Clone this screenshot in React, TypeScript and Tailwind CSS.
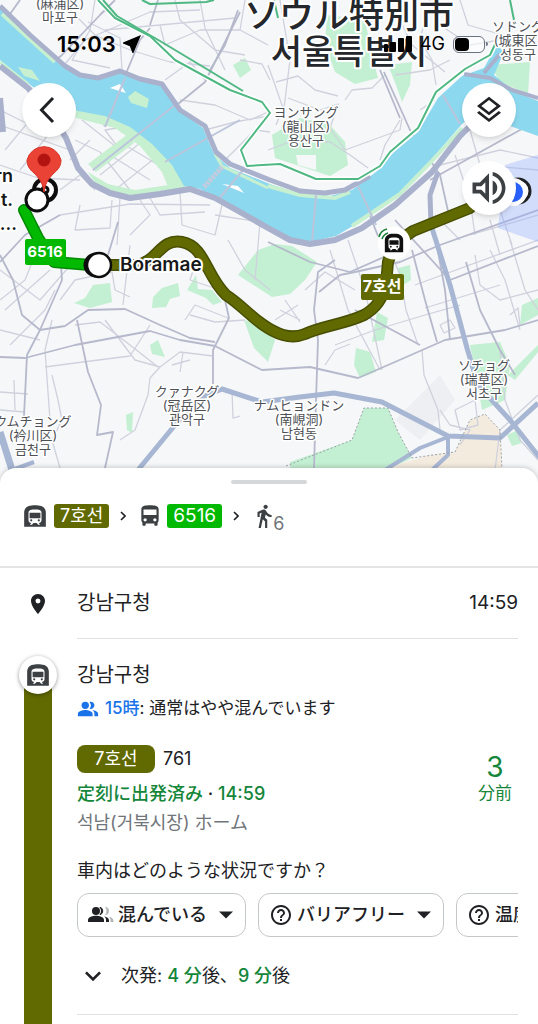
import { useState } from "react";
import {
  MdDirectionsBus,
  MdDirectionsWalk,
  MdHelpOutline,
  MdKeyboardArrowDown,
  MdNearMe,
  MdOutlineLayers,
  MdOutlineVolumeUp,
  MdPeopleAlt,
  MdPlace,
  MdSubway,
} from "react-icons/md";

const SOUTH_EXPRESSWAY =
  "M0 66 L28 88 L50 112 L66 138 L78 168 L92 184 L110 193 L130 198 L160 194 L190 189 L215 198 L240 212 L268 228 L290 240 L310 244 L335 240 L362 228 L395 205 L432 172 L460 136 L478 118";
const NORTH_EXPRESSWAY =
  "M0 6 L30 35 L65 66 L80 75 L98 78 L120 71 L140 79 L162 84 L180 110 L205 126 L216 152 L230 164 L270 180 L300 191 L325 193 L345 190 L370 176";
const METRO_LINE =
  "M470 208 L413 231 L394 244 L388 262 L386 284 C382 300 376 308 364 315 C345 324 322 326 305 334 C290 340 276 334 262 324 C248 314 240 304 226 295 C206 276 205 246 182 242 C160 238 158 262 136 265 L104 265";
const BUS_LINE = "M24 210 L38 238 L54 262 L90 265";

const majorRoads = [
  "M24 416 L27 355 L40 330 L62 280 L60 250",
  "M0 357 L25 358 L75 345 L150 331 L180 340 L215 346 L262 370 L310 367 L358 378 L395 362 L445 340 L505 330 L538 320",
  "M40 330 L22 315 L13 280 L0 255",
  "M40 330 L65 326 L88 310 L125 309 L160 325 L190 338 L215 342",
  "M77 320 L88 372 L101 405 L97 435 L113 432 L105 468",
  "M213 384 L213 350 L229 318 L225 300",
  "M93 170 L140 135 L205 82 L240 12",
  "M210 70 L225 45 L238 10",
  "M384 72 L410 130 L440 175 L450 220",
  "M430 180 L520 130 L538 124",
  "M395 220 L450 280 L538 246",
  "M319 292 L340 275 L355 272 L400 262 L440 245 L538 210",
  "M355 310 L420 345",
  "M314 468 L316 400 L318 340 L314 310 L318 272 L335 260",
  "M412 250 L425 300 L437 342",
  "M466 262 L480 310 L500 350 L515 375",
  "M435 235 L445 290 L450 340",
  "M268 242 L310 262 L350 272 L400 250",
  "M318 192 L312 240",
  "M358 186 L378 236",
  "M380 70 L400 118",
  "M104 126 L140 40 L150 28",
  "M38 75 L62 55 L100 15 L115 0",
  "M0 28 L20 0",
  "M150 25 L158 0",
  "M60 215 L25 235 L0 262",
  "M118 222 L108 255",
];

const minorRoads = [
  "M60 0 L95 35 L130 50 L170 62 L210 66",
  "M95 0 L90 30 L72 60 L110 68",
  "M60 70 L85 40 L150 12 L200 10",
  "M88 22 L120 38 L122 70",
  "M105 30 L160 25 L235 18",
  "M160 25 L165 45 L200 30 L240 30",
  "M175 0 L180 20 L215 50 L245 55",
  "M200 0 L205 28 L225 70",
  "M245 0 L240 30 L268 45",
  "M165 80 L190 62 L205 80",
  "M240 60 L262 64 L270 80",
  "M180 100 L215 105 L250 120 L268 112",
  "M205 130 L235 122 L268 116",
  "M225 160 L255 130 L270 132",
  "M268 65 L283 108 L276 125",
  "M280 0 L290 60 L284 108",
  "M276 82 L298 76 L315 90 L338 96",
  "M288 98 L320 110 L338 104 L330 128 L345 150",
  "M268 150 L295 140 L330 142 L350 155 L368 168",
  "M345 100 L352 90 L372 88 L385 75",
  "M345 150 L400 130 L402 118",
  "M430 0 L420 40 L432 60 L436 85",
  "M440 25 L470 45 L500 40",
  "M395 75 L430 70 L450 60",
  "M400 20 L412 45 L445 72",
  "M460 0 L468 25 L520 40",
  "M0 110 L30 125 L60 115",
  "M0 125 L70 150",
  "M5 150 L30 120 L40 95",
  "M20 170 L60 120",
  "M0 165 L38 178 L80 180",
  "M60 190 L80 175 L95 190",
  "M90 140 L70 160",
  "M82 120 L120 150 L105 130 L135 125",
  "M75 140 L100 152 L130 190",
  "M110 155 L150 180",
  "M125 145 L170 172",
  "M100 175 L150 135",
  "M115 190 L165 150",
  "M80 205 L75 230 L110 228 L112 200",
  "M120 198 L117 245",
  "M60 215 L130 204 L210 205",
  "M150 198 L160 215 L205 212",
  "M130 235 L150 215 L140 200",
  "M180 192 L182 225 L215 235 L222 205",
  "M215 215 L260 222 L255 280",
  "M228 240 L245 270 L270 290",
  "M130 245 L123 305",
  "M60 300 L75 280 L112 272 L115 290 L130 297",
  "M0 270 L40 300 L75 260",
  "M5 310 L50 270",
  "M0 300 L25 280 L35 255",
  "M10 345 L45 310 L55 290",
  "M0 330 L40 340",
  "M45 367 L75 363 L130 356 L150 325",
  "M75 325 L100 322 L130 345 L158 367",
  "M50 420 L45 350 L52 320",
  "M52 375 L58 400 L62 420 L52 440 L60 468",
  "M105 320 L135 360 L160 367 L180 352 L213 356",
  "M160 367 L150 378 L148 395 L135 430 L120 440",
  "M172 365 L190 360 M183 352 L180 372",
  "M0 392 L28 394 M14 380 L15 410 M0 410 L25 412",
  "M190 315 L215 322 L245 320",
  "M185 320 L195 305 L228 318",
  "M200 250 L190 280 L220 290",
  "M232 390 L233 418 L240 416",
  "M280 310 L300 320 M275 320 L298 305 M285 300 L300 322",
  "M305 290 L325 272 L355 290",
  "M330 250 L348 310 L380 370",
  "M348 240 L365 290 L382 370",
  "M335 345 L375 330 L425 315 L460 305",
  "M325 365 L335 350 L350 344",
  "M422 350 L424 375 L438 410 L440 430",
  "M390 250 L400 275 L406 310 L418 345",
  "M475 255 L480 285 L500 300 L538 290",
  "M490 250 L505 280 L520 330",
  "M510 240 L525 290 L538 310",
  "M415 285 L538 240",
  "M425 308 L500 285",
  "M440 165 L500 150 L538 158",
  "M455 155 L470 200 L475 235",
  "M435 215 L460 240",
  "M470 235 L538 215",
  "M500 210 L512 245",
  "M490 220 L500 255",
  "M440 325 L450 320 L455 328 L444 333 Z",
  "M510 315 L518 308 L520 325",
  "M455 410 L475 400 L478 425 L460 430 Z",
  "M440 410 L450 425 L470 430 L460 445",
  "M500 350 L505 400 L520 440 L538 460",
  "M495 470 L500 430 L538 395",
  "M400 120 L385 145 L380 160",
  "M420 110 L435 100",
  "M470 130 L480 165 L538 170",
];

const parks = [
  "M327 15 L365 20 L372 55 L378 78 L355 84 L335 72 L325 45 Z",
  "M388 65 L412 62 L410 85 L402 102 L396 85 Z",
  "M272 135 L300 118 L330 125 L345 142 L348 165 L330 176 L275 158 Z",
  "M233 65 L245 58 L251 70 L240 78 Z",
  "M490 65 L530 62 L528 94 L500 82 Z",
  "M74 303 L85 298 L93 285 L110 283 L112 302 L90 308 Z",
  "M152 308 L153 297 L162 288 L178 283 L180 296 L170 299 L166 307 Z",
  "M187 290 L196 275 L198 289 L212 290 L222 302 L213 305 L206 298 Z",
  "M150 345 L158 340 L165 357 L152 354 Z",
  "M126 415 L133 412 L132 433 L127 430 Z",
  "M238 275 L258 250 L275 244 L292 246 L317 262 L305 280 L290 294 L272 297 Z",
  "M244 320 L262 325 L275 340 L268 362 L254 348 Z",
  "M356 348 L370 352 L376 372 L360 378 L354 365 Z",
  "M377 312 L388 318 L384 340 L372 342 Z",
  "M398 268 L410 265 L411 280 L402 286 Z",
  "M470 345 L500 342 L510 365 L505 400 L482 410 L476 375 Z",
  "M522 305 L538 298 L538 315 L520 325 Z",
  "M508 375 L538 345 L538 352 L515 380 Z",
  "M507 435 L518 430 L522 443 L512 446 Z",
  "M290 462 L352 440 L364 408 L388 408 L398 432 L412 458 L392 468 L290 468 Z",
];

const bridges = [
  "M125 78 L105 127",
  "M175 105 L93 170",
  "M240 120 L165 162",
  "M243 170 L218 200",
  "M316 195 L312 243",
  "M358 186 L376 225",
  "M443 95 L460 124",
];

function PlaceLabel({ x, y, lines }: { x: number; y: number; lines: string[] }) {
  return (
    <text
      textAnchor="middle"
      fontSize="13"
      fill="#4d5055"
      stroke="#ffffff"
      strokeWidth="3"
      strokeLinejoin="round"
      paintOrder="stroke"
    >
      {lines.map((line, idx) => (
        <tspan key={line} x={x} y={y + idx * 14}>
          {line}
        </tspan>
      ))}
    </text>
  );
}

function RouteMap() {
  return (
    <svg
      viewBox="0 0 538 484"
      preserveAspectRatio="xMidYMin slice"
      className="block h-full w-full"
      role="img"
      aria-label="Route map"
    >
      <rect width="538" height="484" fill="#f6f7f9" />
      <path d="M395 420 L440 375 L455 400 L420 440 Z M340 468 L375 425 L395 468 Z" fill="#eeeff2" />
      {parks.map((d) => (
        <path key={d} d={d} fill="#c3efd2" />
      ))}
      <path d="M296 155 L316 155 L316 170 L298 165 Z" fill="#f6f7f9" />
      <path d="M385 468 L430 455 L455 452 L470 420 L485 414 L500 430 L502 468 Z" fill="#f4ebdf" />

      <g fill="none" strokeLinejoin="round">
        <g stroke="#cfd2dd" strokeWidth="1.3">
          {minorRoads.map((d) => (
            <path key={d} d={d} />
          ))}
        </g>
        <g stroke="#b5b9cb" strokeWidth="1.8">
          {majorRoads.map((d) => (
            <path key={d} d={d} />
          ))}
        </g>
      </g>

      {/* Han river and its banks */}
      <path d="M72 106 L105 113 L132 126 L155 143 L175 163 L188 186 L170 192 L162 172 L140 146 L115 128 L76 118 Z" fill="#c6f0d0" />
      <path d="M128 134 L88 164 L96 172 L134 143 Z" fill="#c6f0d0" />
      <path d="M88 172 L108 184 L135 190 L175 184 L174 190 L130 198 L98 188 Z" fill="#c6f0d0" />
      <path
        d="M0 8 L30 37 L65 68 L80 77 L98 80 L120 73 L140 81 L162 86 L178 110 L203 128 L214 154 L230 168 L270 184 L300 194 L330 196 L352 190 L376 172 L394 152 L418 132 L438 98 L462 76 L484 68 L497 45 L504 52 L494 75 L515 92 L538 101 L538 136 L510 126 L478 112 L462 124 L436 154 L396 196 L366 218 L336 236 L310 242 L288 238 L262 224 L225 203 L200 189 L184 186 L172 165 L152 144 L130 127 L105 116 L78 111 L50 100 L24 80 L0 60 Z"
        fill="#8cd8ef"
      />
      <path d="M2 14 L55 62 M268 186 L300 195 L335 198 L350 192 M462 128 L430 163 L400 194 L352 226" fill="none" stroke="#c6f0d0" strokeWidth="4" />
      <path d="M0 62 L28 84 M215 154 L222 166 L268 188" fill="none" stroke="#c6f0d0" strokeWidth="3" />
      <path d="M18 67 L32 70 L40 81 L24 76 Z M128 97 L135 91 L149 99 L147 108 L131 103 Z" fill="#c6f0d0" />
      <path d="M110 88 L120 84 L126 93 Z M222 184 L238 186 L244 193 Z" fill="#fff" />
      <g fill="none" stroke="#bcc5db" strokeWidth="2">
        {bridges.map((d) => (
          <path key={d} d={d} />
        ))}
      </g>
      <path d="M204 187 L223 166" stroke="#c4cbdc" strokeWidth="5" strokeDasharray="3 1" />

      <g fill="none" stroke="#a9b1cc" strokeLinejoin="round">
        <path d={SOUTH_EXPRESSWAY} strokeWidth="6" />
        <path d={NORTH_EXPRESSWAY} strokeWidth="5" />
        <path d="M464 74 L490 78 L512 90 L538 98" strokeWidth="4" />
        <path d="M484 73 L500 54" strokeWidth="4" />
        <path d="M0 98 L3 132" strokeWidth="6" />
        <path d="M438 172 L430 195 L431 225" strokeWidth="5" />
      </g>
      <g fill="none" stroke="#a7b6d3" strokeLinejoin="round">
        <path d="M431 225 L450 285 L467 348 L478 385 L510 420 L540 458" strokeWidth="5" />
        <path d="M138 470 L175 425 L200 398 L222 389 L262 402 L300 397 L334 393 L382 402 L448 436 L500 438 L538 403" strokeWidth="5" />
        <path d="M385 470 L420 448 L448 437 L448 455 L432 470" strokeWidth="4" />
        <path d="M0 432 L12 470" strokeWidth="7" />
        <path d="M12 470 L34 462" strokeWidth="4" />
      </g>
      <path
        d="M286 466 L352 440 L364 408 L388 408 L398 432 L412 458 L455 452 L470 420 L485 414 L500 430 L502 468"
        fill="none"
        stroke="#9aa3a8"
        strokeDasharray="2 2"
      />

      {/* Line 2 */}
      <path
        d="M98 0 L115 18 L150 36 L175 60 L230 90 L262 102 L270 113 L241 150 L247 166 L280 164 L316 179 L358 179 L380 166 L390 152 L418 128 L436 92 L465 69 L490 55 L498 38"
        fill="none"
        stroke="#fff"
        strokeWidth="5"
        strokeLinejoin="round"
      />
      <g fill="none" stroke="#4fb883" strokeWidth="2" strokeLinejoin="round">
        <path d="M98 0 L115 18 L150 36 L175 60 L230 90 L262 102 L270 113 L241 150 L247 166 L280 164 L316 179 L358 179 L380 166 L390 152 L418 128 L436 92 L465 69 L490 55 L498 38" />
        <path d="M103 0 L117 16 L160 41 L205 68 L243 91" />
        <path d="M142 0 L150 4 L206 2 L214 0 M274 0 L278 18 M510 0 L514 20" />
      </g>

      <PlaceLabel x={60} y={8} lines={["(麻浦区)", "마포구"]} />
      <PlaceLabel x={518} y={31} lines={["ソドング", "(城東区)", "성동구"]} />
      <PlaceLabel x={306} y={117} lines={["ヨンサング", "(龍山区)", "용산구"]} />
      <PlaceLabel x={187} y={396} lines={["クァナクグ", "(冠岳区)", "관악구"]} />
      <PlaceLabel x={33} y={426} lines={["クムチョング", "(衿川区)", "금천구"]} />
      <PlaceLabel x={299} y={410} lines={["ナムヒョンドン", "(南峴洞)", "남현동"]} />
      <PlaceLabel x={484} y={370} lines={["ソチョグ", "(瑞草区)", "서초구"]} />
      <g
        fontSize="35"
        fontWeight="500"
        fill="#24272b"
        stroke="#fff"
        strokeWidth="4"
        strokeLinejoin="round"
        paintOrder="stroke"
        textAnchor="middle"
      >
        <text x="349" y="28">ソウル特別市</text>
        <text x="349" y="64" fontSize="34">서울특별시</text>
      </g>

      {/* Current position */}
      <path d="M505 165 L538 155 L538 242 L498 228 Z" fill="#8fabff" opacity="0.35" />
      <circle cx="518" cy="191" r="12" fill="#fff" stroke="#202124" strokeWidth="3" />
      <circle cx="513" cy="192" r="12" fill="#2962ff" stroke="#fff" strokeWidth="4" />

      {/* Route */}
      <g fill="none" strokeLinecap="round" strokeLinejoin="round">
        <path d={METRO_LINE} stroke="#484f00" strokeWidth="12" />
        <path d={METRO_LINE} stroke="#616a00" strokeWidth="9" />
        <path d={BUS_LINE} stroke="#008a00" strokeWidth="12" />
        <path d={BUS_LINE} stroke="#00b900" strokeWidth="9" />
      </g>
      <g fill="#fff" stroke="#0d0d0d" strokeWidth="3">
        <circle cx="45" cy="190" r="11" strokeWidth="4" />
        <circle cx="45" cy="190" r="3" />
        <circle cx="37" cy="200" r="11" />
        <circle cx="96" cy="265" r="11" />
        <circle cx="99" cy="265" r="12" strokeWidth="2.5" />
      </g>
      <path
        d="M44 192 C43 184 40 179 34 173 C29 169 27 165 27 160 A17.500 17.500 0 0 1 61 160 C61 165 59 169 54 173 C48 179 45 184 44 192 Z"
        fill="#ea4335"
        stroke="#d93025"
      />
      <circle cx="44" cy="160" r="6.500" fill="#b31412" />
      <circle cx="394" cy="243" r="16.500" fill="#fff" />
      <MdSubway x="383" y="232" size="22" color="#111" />
      <path d="M379 237 C380 233 383 230 387 229 M382 239 C383 236 385 234 388 233" fill="none" stroke="#188038" strokeWidth="1.600" />

      <rect x="25" y="239" width="41" height="26" rx="2" fill="#00b900" />
      <rect x="361" y="274" width="43" height="26" rx="2" fill="#616a00" />
      <g fill="#fff" fontSize="15" fontWeight="700" textAnchor="middle">
        <text x="45" y="257">6516</text>
        <text x="382" y="292" fontSize="16">7호선</text>
      </g>
      <g fill="#17181a" stroke="#fff" strokeWidth="4" paintOrder="stroke" strokeLinejoin="round" fontWeight="600">
        <text x="120" y="271" fontSize="19">Boramae</text>
        <text x="13" y="182" fontSize="18" textAnchor="end">rn</text>
        <text x="13" y="206" fontSize="18" textAnchor="end">t.</text>
        <text x="17" y="230" fontSize="18" textAnchor="end">...</text>
      </g>
    </svg>
  );
}

function StatusBar() {
  return (
    <div className="absolute inset-x-0 top-0 flex items-center justify-between pt-7 pr-[50px] pl-[57px] text-black">
      <div className="flex items-center gap-1">
        <span className="text-[22px] leading-8 font-semibold">15:03</span>
        <MdNearMe className="size-6" />
      </div>
      <div className="flex items-center">
        <div className="flex items-end gap-[2px]">
          <span className="h-2 w-1 rounded-[1px] bg-black" />
          <span className="h-2.5 w-1.5 rounded-[1px] bg-black" />
          <span className="h-3.5 w-1.5 rounded-[1px] bg-black" />
          <span className="h-4 w-1.5 rounded-[1px] bg-black" />
        </div>
        <span className="ml-2 text-lg">4G</span>
        <div className="ml-2 h-[17px] w-8 rounded-md border border-gray-500 bg-white/60 p-px">
          <div className="h-full w-3.5 rounded-[4px] bg-black" />
        </div>
        <span className="ml-px h-1 w-0.5 rounded-r bg-gray-500" />
      </div>
    </div>
  );
}

function MapButton({ label, children }: { label: string; children: React.ReactNode }) {
  return (
    <button
      aria-label={label}
      className="flex size-[54px] cursor-pointer items-center justify-center rounded-full bg-white text-[#202124] shadow-md"
    >
      {children}
    </button>
  );
}

function CrowdIcon() {
  return (
    <svg viewBox="0 0 26 18" className="h-[18px] w-[26px] shrink-0" aria-hidden="true">
      <g fill="#b4b7ba">
        <path d="M17 1 a4 4 0 0 1 0 8 c2 -2 2 -6 0 -8 Z" />
        <path d="M21 10.500 c3 1 4.500 2.500 4.500 4.500 v1 h-3 v-1 c0 -2 -.5 -3.300 -1.500 -4.500 Z" />
      </g>
      <g fill="#202124">
        <circle cx="8" cy="5" r="4" />
        <path d="M0 16 v-2.200 c0 -2.600 5 -4 8 -4 s8 1.400 8 4 V16 Z" />
        <path d="M12 1.200 a4 4 0 0 1 0 7.600 c2 -2.300 2 -5.300 0 -7.600 Z" stroke="#202124" strokeWidth="1" />
        <path d="M16 10.200 c3 .8 5 2 5 4 V16 h-3 v-2.200 c0 -1.500 -.8 -2.700 -2 -3.600 Z" />
      </g>
    </svg>
  );
}

function Separator() {
  return (
    <svg viewBox="0 0 6 10" className="h-2.5 w-1.5" fill="none" stroke="#202124" strokeWidth="1.600" aria-hidden="true">
      <path d="M1 1 L5 5 L1 9" />
    </svg>
  );
}

const reports = [
  { id: "crowd", label: "混んでいる", crowd: true },
  { id: "access", label: "バリアフリー", crowd: false },
  { id: "temp", label: "温度", crowd: false },
];

export default function App() {
  const [expanded, setExpanded] = useState(false);

  return (
    <main className="flex h-screen flex-col overflow-hidden bg-white font-['Inter','Noto_Sans_CJK_JP','Noto_Sans_CJK_KR',sans-serif] text-[#202124]">
      {/* Map */}
      <section className="relative h-[484px] shrink-0 overflow-hidden">
        <RouteMap />
        <StatusBar />
        <div className="absolute inset-x-0 top-[83px] flex items-start justify-between px-[22px]">
          <MapButton label="戻る">
            <svg viewBox="0 0 16 28" className="mr-1 h-7 w-4" fill="none" stroke="currentColor" strokeWidth="3">
              <path d="M14 2 L2.500 14 L14 26" />
            </svg>
          </MapButton>
          <div className="flex flex-col gap-6">
            <MapButton label="レイヤ">
              <MdOutlineLayers className="size-8" />
            </MapButton>
            <MapButton label="音声">
              <MdOutlineVolumeUp className="size-11 text-[#3c4043]" />
            </MapButton>
          </div>
        </div>
      </section>

      {/* Bottom sheet */}
      <section className="relative -mt-4 flex grow flex-col rounded-t-2xl bg-white shadow-[0_-1px_5px_rgba(0,0,0,0.18)]">
        <div className="mx-auto mt-3 h-1 w-[76px] shrink-0 rounded-full bg-[#d5d7da]" />

        <div className="flex h-[84px] shrink-0 items-start border-b-2 border-[#e3e4e6] px-[22px] pt-5">
          <div className="flex h-6 items-center">
            <MdSubway className="size-[26px] text-[#3c4043]" />
            <span className="ml-1.5 rounded-[3px] bg-[#616a00] px-1.5 text-lg leading-6 text-white">7호선</span>
            <span className="mx-[11px]"><Separator /></span>
            <MdDirectionsBus className="size-[26px] text-[#3c4043]" />
            <span className="ml-1 rounded-[3px] bg-[#00b900] px-1.5 text-[19px] leading-6 text-white">6516</span>
            <span className="ml-[11px] mr-3"><Separator /></span>
            <MdDirectionsWalk className="size-[26px] text-[#3c4043]" />
            <span className="-ml-1 self-start pt-2 text-lg leading-6 text-[#70757a]">6</span>
          </div>
        </div>

        <div className="flex shrink-0">
          <div className="flex w-[77px] items-center pl-[26px]">
            <MdPlace className="size-6" />
          </div>
          <div className="mr-5 flex h-[71px] grow items-center justify-between border-b border-[#dfe1e3] text-xl">
            <span>강남구청</span>
            <time className="text-[19px]">14:59</time>
          </div>
        </div>

        <div className="flex min-h-0 grow">
          {/* Line rail */}
          <div className="flex w-[77px] shrink-0 flex-col items-start pt-[17px]">
            <div className="relative ml-[19px] flex size-[38px] shrink-0 items-center justify-center rounded-full bg-white shadow-[0_1px_4px_rgba(0,0,0,0.4)]">
              <MdSubway className="size-[26px] text-[#3c4043]" />
            </div>
            <div className="-mt-3 ml-6 w-7 grow bg-[#616a00]" />
          </div>

          <div className="mr-5 min-w-0 grow pt-5">
            <h2 className="text-xl leading-8">강남구청</h2>
            <p className="mt-1 flex h-7 items-center text-[17px]">
              <MdPeopleAlt className="mr-1.5 size-[22px] text-[#1a73e8]" />
              <span className="font-medium text-[#1a73e8]">15時</span>: 通常はやや混んでいます
            </p>

            <div className="mt-[22px] flex justify-between">
              <div>
                <div className="flex h-7 items-center gap-2 text-lg">
                  <span className="w-[78px] rounded-lg bg-[#616a00] text-center leading-7 text-white">7호선</span>
                  <span>761</span>
                </div>
                <p className="mt-[7px] text-lg leading-7 font-medium text-[#14863a]">
                  定刻に出発済み <span className="text-[#202124]">·</span> 14:59
                </p>
                <p className="mt-px text-lg leading-7 text-[#70757a]">석남(거북시장) ホーム</p>
              </div>
              <div className="mt-1 mr-1.5 flex flex-col items-center text-[#14863a]">
                <span className="text-[28px] leading-9">3</span>
                <span className="text-[17px] leading-4">分前</span>
              </div>
            </div>

            <p className="mt-5 text-lg leading-7">車内はどのような状況ですか？</p>
            <div className="mt-2 flex gap-3 overflow-hidden">
              {reports.map((report) => (
                <button
                  key={report.id}
                  className="flex h-11 shrink-0 cursor-pointer items-center rounded-xl border border-[#c4c7c9] pr-3 pl-2.5 text-lg font-medium"
                >
                  {report.crowd ? <CrowdIcon /> : <MdHelpOutline className="size-6" />}
                  <span className="ml-1">{report.label}</span>
                  <svg viewBox="0 0 14 8" className="ml-3 h-2 w-3.5" fill="currentColor" aria-hidden="true">
                    <path d="M0 0.500 H14 L7 7.500 Z" />
                  </svg>
                </button>
              ))}
            </div>

            <button
              onClick={() => setExpanded(!expanded)}
              aria-expanded={expanded}
              className="flex h-[78px] w-full cursor-pointer items-center border-b border-[#dfe1e3] text-left text-lg"
            >
              <MdKeyboardArrowDown className="mr-3 size-8" />
              <span>
                次発: <span className="font-medium text-[#14863a]">4 分</span>後、
                <span className="font-medium text-[#14863a]">9 分</span>後
              </span>
            </button>
          </div>
        </div>
      </section>
    </main>
  );
}
